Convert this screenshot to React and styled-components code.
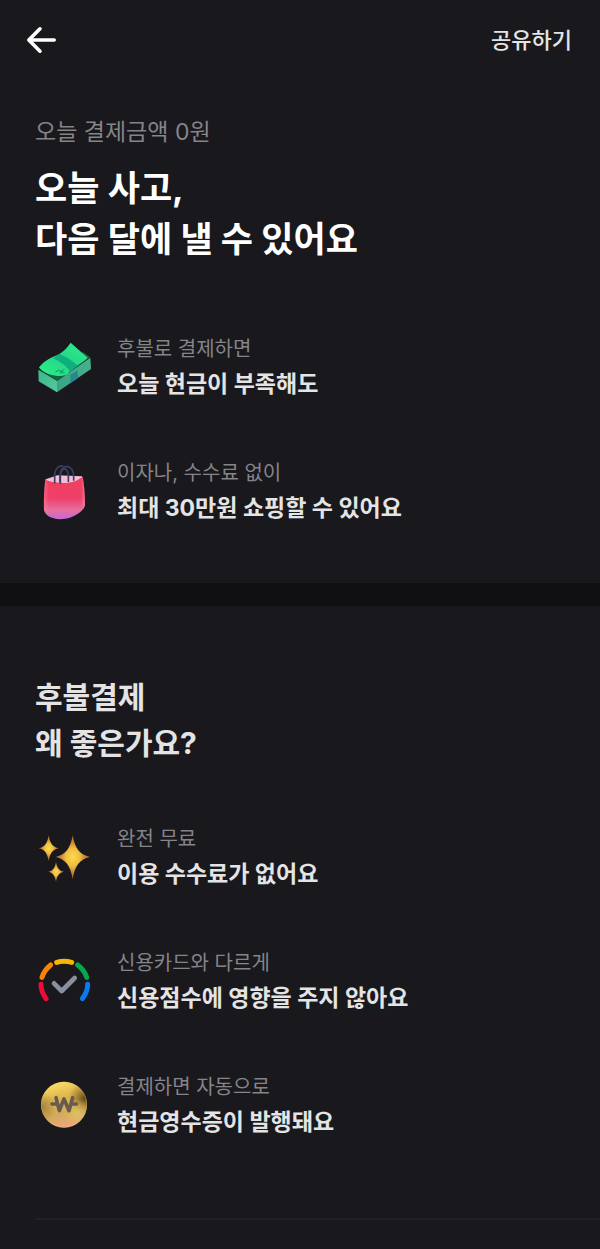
import React from "react";
import styled, { createGlobalStyle } from "styled-components";

const COLORS = {
  background: "#19181d",
  band: "#101012",
  white: "#ffffff",
  text: "#e4e4e5",
  muted: "#858489",
  line: "#212025",
};

const App = () => {
  return (
    <>
      <GlobalStyle />
      <Header>
        <BackButton type="button" aria-label="뒤로 가기">
          <BackIcon />
        </BackButton>
        <ShareButton type="button">공유하기</ShareButton>
      </Header>
      <main>
        <Intro>
          <Eyebrow>오늘 결제금액 0원</Eyebrow>
          <Title>
            오늘 사고,
            <br />
            다음 달에 낼 수 있어요
          </Title>
          <FeatureList>
            <Feature
              icon={<CashIcon />}
              label="후불로 결제하면"
              text="오늘 현금이 부족해도"
            />
            <Feature
              icon={<BagIcon />}
              label="이자나, 수수료 없이"
              text="최대 30만원 쇼핑할 수 있어요"
            />
          </FeatureList>
        </Intro>
        <Benefits>
          <Subtitle>
            후불결제
            <br />왜 좋은가요?
          </Subtitle>
          <FeatureList>
            <Feature
              icon={<SparklesIcon />}
              label="완전 무료"
              text="이용 수수료가 없어요"
            />
            <Feature
              icon={<ScoreIcon />}
              label="신용카드와 다르게"
              text="신용점수에 영향을 주지 않아요"
            />
            <Feature
              icon={<CoinIcon />}
              label="결제하면 자동으로"
              text="현금영수증이 발행돼요"
            />
          </FeatureList>
        </Benefits>
        <Divider />
      </main>
    </>
  );
};

const Feature = ({ icon, label, text }) => (
  <FeatureItem>
    {icon}
    <div>
      <FeatureLabel>{label}</FeatureLabel>
      <FeatureText>{text}</FeatureText>
    </div>
  </FeatureItem>
);

const BackIcon = () => (
  <svg width="32" height="32" viewBox="0 0 32 32" fill="none" aria-hidden="true">
    <path
      d="M29.2 16H4.5M15 4.8L3.8 16L15 27.2"
      stroke="currentColor"
      strokeWidth="3.6"
      strokeLinecap="round"
      strokeLinejoin="round"
    />
  </svg>
);

const CashIcon = () => (
  <FeatureIcon viewBox="45 39 174 174" aria-hidden="true">
    <defs>
      <linearGradient id="cash-top" x1="0" y1="1" x2="1" y2="0">
        <stop offset="0" stopColor="#2bf08a" />
        <stop offset="0.5" stopColor="#25d586" />
        <stop offset="1" stopColor="#30f08e" />
      </linearGradient>
      <linearGradient id="cash-left" x1="0" y1="0" x2="1" y2="1">
        <stop offset="0" stopColor="#3bb889" />
        <stop offset="1" stopColor="#52c99c" />
      </linearGradient>
      <linearGradient id="cash-right" x1="0" y1="1" x2="1" y2="0">
        <stop offset="0" stopColor="#3aa083" />
        <stop offset="1" stopColor="#48b38c" />
      </linearGradient>
    </defs>
    <path d="M55 134L112 168L111 202L56 169Z" fill="url(#cash-left)" />
    <path d="M111 167L211 98L213 132L111 202Z" fill="url(#cash-right)" />
    <path d="M60 134L190 82L211 97L112 168Z" fill="#11653f" />
    <path d="M151 150L173 136L174 159L151 175Z" fill="#28888d" />
    <path
      d="M152 53C136 77 119 88 103 94C80 104 66 115 57 128C68 139 80 146 94 149C110 153 128 156 142 148C154 129 178 121 203 98Z"
      fill="url(#cash-top)"
    />
    <path
      d="M119 87C110 93 105 96 99 99C122 111 139 122 151 140C157 134 165 128 173 122C157 107 141 97 119 87Z"
      fill="#0fae80"
    />
    <path
      d="M106 142L116 135L123 140L133 133M119 146L127 141L134 145"
      fill="none"
      stroke="#10945f"
      strokeWidth="3"
    />
  </FeatureIcon>
);

const BagIcon = () => (
  <FeatureIcon viewBox="46 36 174 174" aria-hidden="true">
    <defs>
      <linearGradient id="bag-body" x1="0" y1="0" x2="0" y2="1">
        <stop offset="0" stopColor="#f1415c" />
        <stop offset="0.5" stopColor="#ef3f69" />
        <stop offset="0.78" stopColor="#e66f9d" />
        <stop offset="1" stopColor="#c467d9" />
      </linearGradient>
      <linearGradient id="bag-side" x1="0" y1="0" x2="1" y2="0">
        <stop offset="0" stopColor="#f6849e" stopOpacity="0.5" />
        <stop offset="0.12" stopColor="#f6849e" stopOpacity="0" />
        <stop offset="0.9" stopColor="#f6849e" stopOpacity="0" />
        <stop offset="1" stopColor="#f898bd" stopOpacity="0.6" />
      </linearGradient>
    </defs>
    <path d="M78 88L113 76L187 79L190 92L140 103L82 98Z" fill="#f4bdd8" />
    <path
      d="M121 96V74C123 56 132 49 143 49C155 51 162 64 162 78V92"
      fill="none"
      stroke="#3b3e63"
      strokeWidth="5"
    />
    <path
      d="M77 88C90 98 125 100 146 98C163 96 178 89 189 80C194 105 196 140 196 166C190 188 153 208 120 208C99 207 79 199 73 181C72 150 74 112 77 88Z"
      fill="url(#bag-body)"
    />
    <path
      d="M77 88C90 98 125 100 146 98C163 96 178 89 189 80C194 105 196 140 196 166C190 188 153 208 120 208C99 207 79 199 73 181C72 150 74 112 77 88Z"
      fill="url(#bag-side)"
    />
    <path
      d="M105 98V72C108 53 119 46 129 48M122 100V76C124 60 132 54 139 58C145 63 147 77 146 94"
      fill="none"
      stroke="#3b3e63"
      strokeWidth="5"
      strokeLinecap="round"
    />
  </FeatureIcon>
);

const SparklesIcon = () => (
  <FeatureIcon viewBox="45 39 174 174" aria-hidden="true">
    <defs>
      <radialGradient id="sparkle">
        <stop offset="0" stopColor="#fadb4b" />
        <stop offset="0.4" stopColor="#f1bd42" />
        <stop offset="0.7" stopColor="#c78638" />
        <stop offset="1" stopColor="#a3632c" />
      </radialGradient>
    </defs>
    <g fill="url(#sparkle)">
      <path d="M158 61C165 101 179 119 210 126C179 133 165 151 158 192C151 151 137 133 107 126C137 119 151 101 158 61Z" />
      <path d="M86 61C90 85 97 96 117 100C97 104 90 115 86 138C82 115 75 104 56 100C75 96 82 85 86 61Z" />
      <path d="M108 140C111 159 117 167 132 170C117 173 111 182 108 200C105 182 99 173 85 170C99 167 105 159 108 140Z" />
    </g>
  </FeatureIcon>
);

const ScoreIcon = () => (
  <FeatureIcon viewBox="45 36 174 174" aria-hidden="true">
    <g fill="none" strokeWidth="15" strokeLinecap="round">
      <path d="M63 133Q63 156 78 176" stroke="#ed0b37" />
      <path d="M66 112Q73 90 92 75" stroke="#fb8109" />
      <path d="M110 67Q132 61 155 67" stroke="#f8b504" />
      <path d="M173 75Q193 90 200 112" stroke="#08a54e" />
      <path d="M203 133Q203 156 187 176" stroke="#087bf0" />
    </g>
    <path
      d="M102 130L125 153L164 114"
      fill="none"
      stroke="#89919f"
      strokeWidth="14"
      strokeLinecap="round"
      strokeLinejoin="round"
    />
  </FeatureIcon>
);

const CoinIcon = () => (
  <FeatureIcon viewBox="45 47 174 174" aria-hidden="true">
    <defs>
      <linearGradient id="coin-face" x1="0.2" y1="0" x2="0.5" y2="1">
        <stop offset="0" stopColor="#ffe26a" />
        <stop offset="0.35" stopColor="#e0b950" />
        <stop offset="0.7" stopColor="#d2ab5a" />
        <stop offset="1" stopColor="#eda680" />
      </linearGradient>
      <radialGradient id="coin-shade" cx="0.95" cy="0.36" r="0.36">
        <stop offset="0" stopColor="#4a340c" stopOpacity="0.85" />
        <stop offset="1" stopColor="#8a6420" stopOpacity="0" />
      </radialGradient>
      <radialGradient id="coin-left" cx="0.02" cy="0.55" r="0.32">
        <stop offset="0" stopColor="#80602a" stopOpacity="0.6" />
        <stop offset="1" stopColor="#80602a" stopOpacity="0" />
      </radialGradient>
      <radialGradient id="coin-glow" cx="0.78" cy="0.68" r="0.3">
        <stop offset="0" stopColor="#dcc35c" stopOpacity="0.9" />
        <stop offset="1" stopColor="#dcc35c" stopOpacity="0" />
      </radialGradient>
    </defs>
    <circle cx="132" cy="133" r="69" fill="url(#coin-face)" />
    <circle cx="132" cy="133" r="69" fill="url(#coin-shade)" />
    <circle cx="132" cy="133" r="69" fill="url(#coin-left)" />
    <circle cx="132" cy="133" r="69" fill="url(#coin-glow)" />
    <circle
      cx="132"
      cy="133"
      r="68"
      fill="none"
      stroke="#f3cf6b"
      strokeOpacity="0.3"
      strokeWidth="2"
    />
    <path
      d="M108 112L118 151L132 116L147 151L158 112M96 131H109M157 131H169"
      fill="none"
      stroke="#6b5a4f"
      strokeWidth="11"
      strokeLinecap="round"
      strokeLinejoin="round"
    />
  </FeatureIcon>
);

const GlobalStyle = createGlobalStyle`
  * {
    box-sizing: border-box;
    margin: 0;
    padding: 0;
  }
  body {
    background-color: ${COLORS.background};
    color: ${COLORS.text};
    font-family: Inter, "Noto Sans CJK KR", sans-serif;
  }
`;

const Header = styled.header`
  display: flex;
  align-items: center;
  justify-content: space-between;
  height: 80px;
  padding: 0 28px 0 25px;
`;

const BackButton = styled.button`
  display: flex;
  border: none;
  background: none;
  color: ${COLORS.white};
  cursor: pointer;
`;

const ShareButton = styled.button`
  border: none;
  background: none;
  color: ${COLORS.text};
  font-family: inherit;
  font-size: 22px;
  font-weight: 500;
  line-height: 32px;
  cursor: pointer;
`;

const Intro = styled.section`
  padding: 36px 35px 57px;
  border-bottom: 23px solid ${COLORS.band};
`;

const Benefits = styled.section`
  padding: 68px 35px 78px;
`;

const Eyebrow = styled.p`
  color: ${COLORS.muted};
  font-size: 23px;
  line-height: 32px;
`;

const Title = styled.h1`
  margin: 15px 0 67px;
  color: ${COLORS.white};
  font-size: 35px;
  font-weight: 700;
  line-height: 51px;
`;

const Subtitle = styled.h2`
  margin-bottom: 56px;
  font-size: 30px;
  font-weight: 700;
  line-height: 46px;
`;

const FeatureList = styled.ul`
  display: flex;
  flex-direction: column;
  gap: 54px;
  list-style: none;
`;

const FeatureItem = styled.li`
  display: flex;
  align-items: center;
  gap: 24px;
`;

const FeatureIcon = styled.svg`
  flex: none;
  width: 58px;
  height: 58px;
`;

const FeatureLabel = styled.p`
  color: ${COLORS.muted};
  font-size: 20px;
  line-height: 34px;
`;

const FeatureText = styled.p`
  font-size: 23px;
  font-weight: 700;
  line-height: 36px;
`;

const Divider = styled.hr`
  margin-left: 35px;
  border: none;
  border-top: 2px solid ${COLORS.line};
`;

export default App;
